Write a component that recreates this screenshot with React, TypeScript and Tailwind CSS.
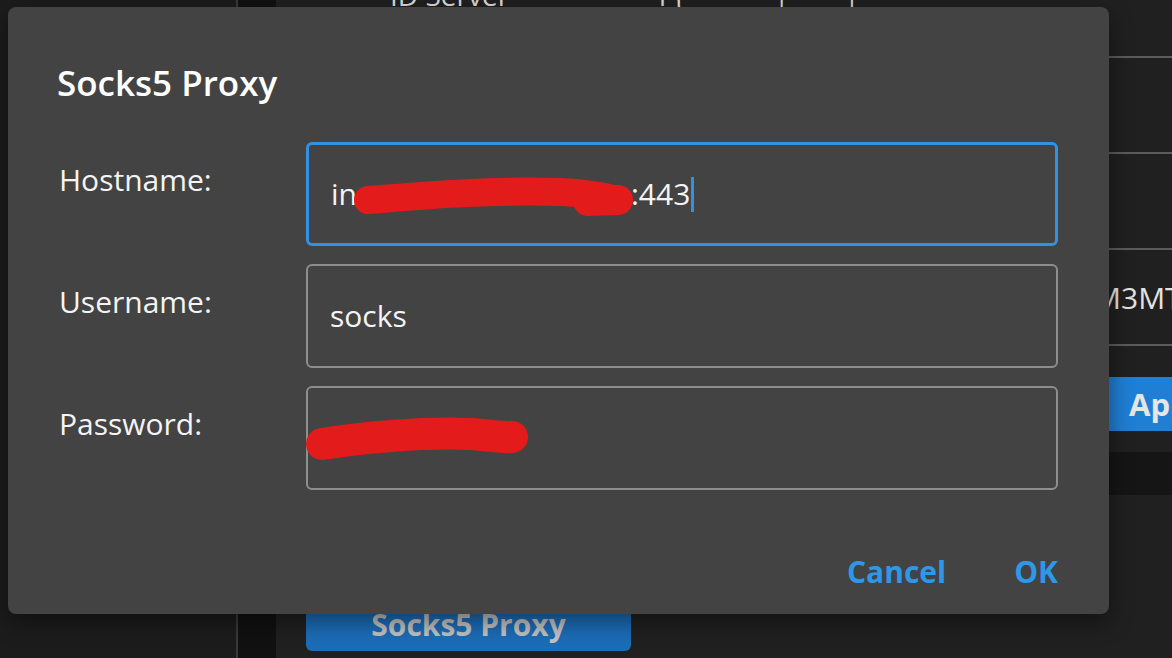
import React from "react";

const font = { fontFamily: '"Open Sans", "Noto Sans", sans-serif' };

function Field({ label, focused, children }: { label: string; focused?: boolean; children?: React.ReactNode }) {
  return (
    <div className="flex">
      <div className="w-[249px] shrink-0 pt-[19px] pl-[2px] text-[30px] leading-[38px] text-[#f4f4f4]">{label}</div>
      <div
        className={
          "relative flex h-[104px] w-[752px] items-center rounded-[6px] px-[22px] text-[30px] leading-[38px] text-[#f4f4f4] " +
          (focused ? "border-[3px] border-[#3391e2]" : "border-2 border-[#8e8e8e]")
        }
      >
        {children}
      </div>
    </div>
  );
}

export default function App() {
  return (
    <div className="relative h-[658px] w-[1172px] overflow-hidden bg-[#1f1f1f]" style={font}>
      {/* background application */}
      <div className="flex h-full">
        <div className="w-[236px] shrink-0 bg-[#1c1c1c]" />
        <div className="w-[2px] shrink-0 bg-[#3a3a3a]" />
        <div className="w-[38px] shrink-0 bg-[#111111]" />
        <div className="flex min-w-0 flex-1 flex-col overflow-hidden bg-[#202020]">
          <div className="h-[58px] shrink-0 overflow-hidden border-b-2 border-[#5c5c5c]">
            <div className="-mt-[24px] flex whitespace-nowrap pl-[114px] text-[28px] leading-[38px] text-[#dcdcdc]">
              <span>ID Server</span>
              <span className="ml-[150px]">i {"{"}</span>
              <span className="ml-[90px]">|</span>
              <span className="ml-[55px]">|</span>
            </div>
          </div>
          <div className="h-[96px] shrink-0 border-b-2 border-[#5c5c5c]" />
          <div className="h-[96px] shrink-0 border-b-2 border-[#5c5c5c]" />
          <div className="flex h-[96px] shrink-0 items-center border-b-2 border-[#5c5c5c]">
            <span className="ml-[818px] whitespace-nowrap text-[30px] text-[#e2e2e2]">M3MTQ</span>
          </div>
          <div className="mt-[31px] flex h-[54px] shrink-0">
            <div className="ml-[824px] flex w-[140px] shrink-0 items-center bg-[#1f7fd5] pl-[29px] text-[31px] font-bold text-[#e6e6e6]">
              Apply
            </div>
          </div>
          <div className="mt-[21px] h-[43px] shrink-0 bg-[#151515]" />
          <div className="mt-[102px] flex h-[54px] shrink-0">
            <div className="ml-[30px] flex w-[325px] shrink-0 items-center justify-center rounded-[6px] bg-[#1c6db8] text-[30px] font-bold text-[#c4c4c4]">
              Socks5 Proxy
            </div>
          </div>
        </div>
      </div>

      {/* dialog */}
      <div className="absolute left-[8px] top-[7px] flex h-[607px] w-[1101px] flex-col rounded-[8px] bg-[#434343] pl-[49px] pr-[51px] shadow-[0_8px_24px_rgba(0,0,0,0.45)]">
        <div className="pt-[56px] text-[35px] font-semibold leading-[40px] text-white">Socks5 Proxy</div>
        <div className="mt-[39px] flex flex-col gap-[18px]">
          <Field label="Hostname:" focused>
            <span>in</span>
            <span className="inline-block w-[274px]" />
            <span>:443</span>
            <span className="ml-[1px] inline-block h-[35px] w-[3px] bg-[#3391e2]" />
          </Field>
          <Field label="Username:">
            <span>socks</span>
          </Field>
          <Field label="Password:" />
        </div>
        <div className="mt-[62px] flex justify-end gap-[68px] text-[30px] font-bold leading-[40px] text-[#2e98e8]">
          <span>Cancel</span>
          <span>OK</span>
        </div>
      </div>

      {/* red redaction scribbles */}
      <svg className="pointer-events-none absolute left-0 top-0" width="1172" height="658" viewBox="0 0 1172 658">
        <g stroke="#e41b1b" fill="none" strokeLinecap="round" strokeLinejoin="round">
          <path d="M368 200 C 420 196, 480 190, 560 192 C 590 193, 605 197, 618 200" strokeWidth="28" />
          <path d="M588 201 L 618 200" strokeWidth="30" />
          <path d="M322 444 C 360 438, 420 432, 470 434 C 490 435, 500 438, 512 437" strokeWidth="32" />
        </g>
        <circle cx="513" cy="437" r="14" fill="#e41b1b" />
      </svg>
    </div>
  );
}
